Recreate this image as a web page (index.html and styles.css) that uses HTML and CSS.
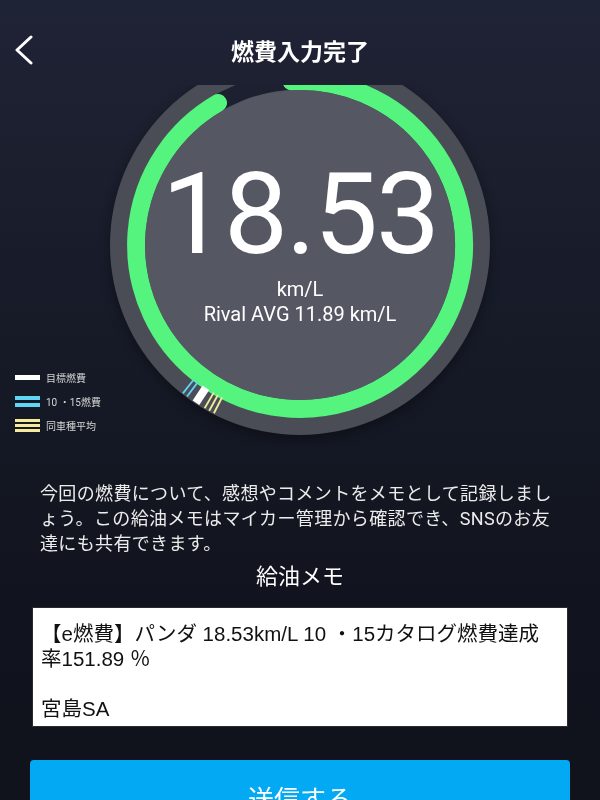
FILE: index.html
```html
<!DOCTYPE html>
<html lang="ja">
<head>
    <meta charset="UTF-8">
    <meta name="viewport" content="width=device-width, initial-scale=1.0">
    <title>燃費入力完了</title>
    <link rel="stylesheet" href="styles.css">
</head>
<body>
    <header class="nav-bar">
        <button class="back-btn" aria-label="戻る">
            <svg width="20" height="30" viewBox="0 0 20 30">
                <polyline points="18,2 4,15 18,28" fill="none" stroke="#fff" stroke-width="3" stroke-linecap="round" stroke-linejoin="round"/>
            </svg>
        </button>
        <h1 class="nav-title">燃費入力完了</h1>
    </header>

    <section class="gauge">
        <svg class="gauge-svg" width="600" height="360" viewBox="0 0 600 360">
            <circle class="gauge-outer" cx="300" cy="160" r="190"/>
            <!-- 未達部分のトラック -->
            <circle cx="300" cy="160" r="164" fill="none" stroke="#1d2031" stroke-width="17"/>
            <path d="M 291.4 -3.8 A 164 164 0 1 1 218 18" fill="none" stroke="#55f47f" stroke-width="18" stroke-linecap="round"/>
            <circle cx="300" cy="160" r="155" fill="#555862"/>

            <!-- 目標・カタログ・同車種のマーカー -->
            <g stroke-width="1.8">
                <line x1="300" y1="-11" x2="300" y2="-29" stroke="#5fd4f4" transform="rotate(218.3 300 160)"/>
                <line x1="300" y1="-11" x2="300" y2="-29" stroke="#5fd4f4" transform="rotate(216.7 300 160)"/>
                <line x1="300" y1="-11" x2="300" y2="-29" stroke="#ffffff" stroke-width="8" transform="rotate(213.4 300 160)"/>
                <line x1="300" y1="-11" x2="300" y2="-29" stroke="#f4ec9c" transform="rotate(210.3 300 160)"/>
                <line x1="300" y1="-11" x2="300" y2="-29" stroke="#f4ec9c" transform="rotate(208.7 300 160)"/>
                <line x1="300" y1="-11" x2="300" y2="-29" stroke="#f4ec9c" transform="rotate(207.1 300 160)"/>
            </g>
        </svg>

        <div class="gauge-text">
            <div class="gauge-value">18.53</div>
            <div class="gauge-unit">km/L</div>
            <div class="gauge-unit">Rival AVG 11.89 km/L</div>
        </div>

        <ul class="legend">
            <li><span class="swatch swatch-target"><i></i></span>目標燃費</li>
            <li><span class="swatch swatch-catalog"><i></i><i></i></span>10 ・15燃費</li>
            <li><span class="swatch swatch-average"><i></i><i></i><i></i></span>同車種平均</li>
        </ul>
    </section>

    <p class="intro">今回の燃費について、感想やコメントをメモとして記録しましょう。この給油メモはマイカー管理から確認でき、SNSのお友達にも共有できます。</p>

    <h2 class="memo-title">給油メモ</h2>
    <textarea class="memo">【e燃費】パンダ 18.53km/L 10 ・15カタログ燃費達成率151.89 ％

宮島SA</textarea>

    <button class="submit-btn">送信する</button>
</body>
</html>
```

FILE: styles.css
```css
html {
    background: #10131c;
}
body {
    margin: 0;
    min-height: 100vh;
    background: linear-gradient(#1f2336 0, #1c2030 110px, #151925 400px, #11141e 600px, #10131c 100%);
    color: #fff;
    font-family: Roboto, "Noto Sans CJK JP", sans-serif;
}
.nav-bar {
    display: grid;
    grid-template-columns: 60px 1fr 60px;
    align-items: center;
    height: 70px;
    padding-top: 15px;
}
.back-btn {
    display: flex;
    padding: 0 0 0 13px;
    background: none;
    border: none;
    cursor: pointer;
}
.nav-title {
    margin: 0;
    text-align: center;
    font-size: 23px;
    font-weight: 700;
    font-family: "Noto Sans CJK JP", sans-serif;
}
.gauge {
    position: relative;
    height: 360px;
}
.gauge-svg {
    display: block;
}
.gauge-outer {
    fill: #4a4d56;
    filter: drop-shadow(0 4px 6px rgba(0, 0, 0, 0.35));
}
.gauge-text {
    position: absolute;
    top: 87px;
    left: 0;
    right: 0;
    text-align: center;
    font-family: Roboto, sans-serif;
}
.gauge-value {
    font-size: 114px;
    line-height: 84px;
    letter-spacing: -2px;
    margin-bottom: 20.5px;
}
.gauge-unit {
    font-size: 20px;
    line-height: 25px;
}
.legend {
    position: absolute;
    left: 15px;
    top: 280px;
    margin: 0;
    padding: 0;
    list-style: none;
}
.legend li {
    display: flex;
    align-items: center;
    gap: 6px;
    height: 24px;
    font-size: 10px;
    color: #d6d6d6;
}
.swatch {
    display: flex;
    flex-direction: column;
    width: 25px;
}
.swatch-target i {
    height: 5px;
    background: #fff;
}
.swatch-catalog {
    gap: 3px;
}
.swatch-catalog i {
    height: 4px;
    background: #5fd4f4;
}
.swatch-average {
    gap: 2px;
}
.swatch-average i {
    height: 3px;
    background: #f4ec9c;
}
.intro {
    margin: 36px 0 0;
    padding: 0 40px;
    font-size: 18px;
    letter-spacing: 0.35px;
    line-height: 25px;
    color: #ececec;
    line-break: loose;
}
.memo-title {
    margin: 7px 0 0;
    text-align: center;
    font-size: 22px;
    font-weight: 400;
    line-height: 28px;
}
.memo {
    display: block;
    box-sizing: border-box;
    width: 536px;
    height: 120px;
    margin: 16px 32px 0;
    padding: 13px 8px;
    border: 1px solid #2a2a2a;
    background: #fff;
    color: #111;
    font-family: "Liberation Sans", "Noto Sans CJK JP", sans-serif;
    font-size: 20.5px;
    line-height: 25px;
    resize: none;
    outline: none;
}
.submit-btn {
    display: block;
    width: 540px;
    height: 74px;
    margin: 33px 30px 0;
    background: #03a9f2;
    border: none;
    border-radius: 4px;
    color: #fff;
    font-family: "Noto Sans CJK JP", sans-serif;
    font-size: 26px;
    cursor: pointer;
}
```
